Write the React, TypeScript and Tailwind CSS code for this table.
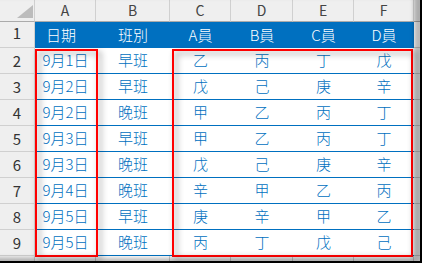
import React from "react";

const cols = ["A", "B", "C", "D", "E", "F"];
const heads = ["日期", "班別", "A員", "B員", "C員", "D員"];

const rows = [
  ["9月1日", "早班", "乙", "丙", "丁", "戊"],
  ["9月2日", "早班", "戊", "己", "庚", "辛"],
  ["9月2日", "晚班", "甲", "乙", "丙", "丁"],
  ["9月3日", "早班", "甲", "乙", "丙", "丁"],
  ["9月3日", "晚班", "戊", "己", "庚", "辛"],
  ["9月4日", "晚班", "辛", "甲", "乙", "丙"],
  ["9月5日", "早班", "庚", "辛", "甲", "乙"],
  ["9月5日", "晚班", "丙", "丁", "戊", "己"],
];

const font = { fontFamily: '"Noto Sans CJK TC", "Noto Sans", sans-serif' };

export default function App() {
  return (
    <div className="w-[429px] h-[265px] bg-white">
      <div className="relative w-[422px] h-[263px] border-r-2 border-b-2 border-black overflow-hidden font-light" style={font}>
        <div className="grid grid-cols-[35px_61px_74px_61px_62px_61px_60px_1fr] grid-rows-[22px_repeat(9,26px)_1fr] w-[420px] h-[261px]">
          {/* column letters */}
          <div className="relative bg-[#efefef] border-r border-b border-r-[#d0d0d0] border-b-[#ababab]">
            <div className="absolute left-[17px] top-[5px] w-0 h-0 border-l-[16px] border-l-transparent border-b-[13px] border-b-[#bcbcbc]" />
          </div>
          {cols.map((c) => (
            <div
              key={c}
              className="flex items-center justify-center bg-[#efefef] border-r border-b border-r-[#d0d0d0] border-b-[#ababab] text-[14px] text-[#444] font-normal"
            >
              {c}
            </div>
          ))}
          <div className="bg-[#efefef] border-b border-b-[#ababab]" />

          {/* row 1 */}
          <div className="flex items-end justify-center pb-[3px] bg-[#efefef] border-r border-b border-[#d0d0d0] text-[15px] text-[#333] font-normal">
            1
          </div>
          {heads.map((h, i) => (
            <div
              key={h}
              className={`flex items-center bg-[#0070c0] text-white text-[15px] ${i === 0 ? "justify-start pl-[11px]" : "justify-center"}`}
            >
              {h}
            </div>
          ))}
          <div className="bg-white border-b border-[#d0d0d0]" />

          {/* data rows */}
          {rows.map((r, ri) => (
            <React.Fragment key={ri}>
              <div className="flex items-center justify-center pt-[2px] bg-[#efefef] border-r border-b border-[#d0d0d0] text-[15px] text-[#333] font-normal">
                {ri + 2}
              </div>
              {r.map((v, ci) => (
                <div
                  key={ci}
                  className="flex items-center justify-center bg-white border-b border-[#0070c0] text-[15px] text-[#0070c0]"
                >
                  {v}
                </div>
              ))}
              <div className="bg-white border-b border-[#d0d0d0]" />
            </React.Fragment>
          ))}

          {/* partial row 10 */}
          <div className="bg-[#efefef] border-r border-[#d0d0d0]" />
          {cols.map((c) => (
            <div key={c} className="bg-white border-r border-[#d0d0d0]" />
          ))}
          <div className="bg-white" />
        </div>

        {/* red highlight boxes */}
        <div className="absolute left-[35px] top-[49px] w-[63px] h-[208px] border-2 border-[#ff0000] drop-shadow-[3px_3px_3px_rgba(0,0,0,0.45)]" />
        <div className="absolute left-[172px] top-[49px] w-[241px] h-[208px] border-2 border-[#ff0000] drop-shadow-[3px_3px_3px_rgba(0,0,0,0.45)]" />

        {/* frame shade */}
        <div className="absolute inset-0 pointer-events-none shadow-[inset_-6px_-3px_4px_rgba(0,0,0,0.28)]" />
      </div>
    </div>
  );
}
